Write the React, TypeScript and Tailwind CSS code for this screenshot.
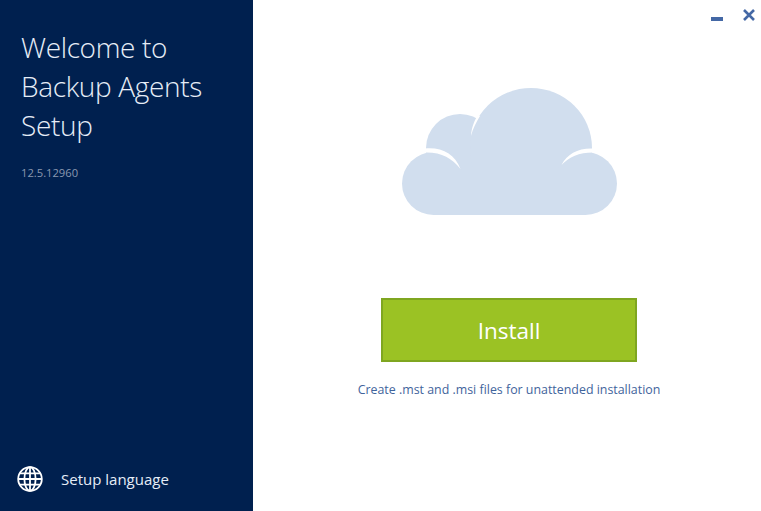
const font = "font-['Open_Sans','Noto_Sans',sans-serif]";

function Cloud() {
  return (
    <svg width="215" height="127" viewBox="402 88 215 127" className="block">
      <g fill="#d1deee">
        <circle cx="460" cy="148" r="34" />
        <rect x="426" y="148" width="166" height="40" />
        <ellipse cx="531" cy="148" rx="61" ry="60" />
        <circle cx="433.5" cy="183.5" r="31.5" />
        <circle cx="585.5" cy="183.5" r="31.5" />
        <rect x="433" y="170" width="152" height="45" />
      </g>
      <g fill="#ffffff">
        <path d="M471 136 C471.5 128 474 121 477.5 116 L480 116 C476.5 122 473 128 471 136Z" />
        <path d="M425 148.5 C442 147 455 154 460.5 169 C452 158 441 152 425 152.5Z" />
        <path d="M593 148.5 C578 148 567 154 561.5 165 C569 157 579 152.5 593 152.5Z" />
      </g>
    </svg>
  );
}

function GlobeIcon() {
  return (
    <svg width="26" height="26" viewBox="0 0 26 26" fill="none" stroke="#ffffff" strokeWidth="1.8">
      <circle cx="13" cy="13" r="11.8" />
      <ellipse cx="13" cy="13" rx="5.6" ry="11.8" />
      <path d="M13 1.2V24.8M1.2 13H24.8M3 7.4H23M3 18.6H23" />
    </svg>
  );
}

export default function App() {
  return (
    <div className={`flex h-[511px] w-[761px] overflow-hidden bg-white ${font}`}>
      <aside className="flex w-[253px] shrink-0 flex-col justify-between bg-[#00204f]">
        <div className="pl-[21px] pt-[28px]">
          <h1 className="text-[28px] font-light leading-[39px] tracking-[-0.35px] text-[#e6edf7]">
            Welcome to
            <br />
            Backup Agents
            <br />
            Setup
          </h1>
          <p className="mt-[20px] text-[11.2px] leading-[16px] text-[#8a98b0]">12.5.12960</p>
        </div>
        <div className="flex items-center gap-[18px] pb-[19px] pl-[17px]">
          <GlobeIcon />
          <span className="text-[15px] leading-[20px] text-[#e6edf7]">Setup language</span>
        </div>
      </aside>
      <main className="flex flex-1 flex-col items-center pl-[4px]">
        <div className="flex h-[88px] w-full items-start justify-end gap-[20px] pr-[6px] pt-[9px]">
          <span className="mt-[8px] h-[4px] w-[12px] bg-[#4468a5]" />
          <svg width="12" height="12" viewBox="0 0 12 12" stroke="#4468a5" strokeWidth="2.6" fill="none">
            <path d="M1 1L11 11M11 1L1 11" />
          </svg>
        </div>
        <Cloud />
        <button className="mt-[83px] flex h-[64px] w-[256px] items-center justify-center border-2 border-[#7fa620] bg-[#9bc224] pt-[2px] text-[22.5px] text-white">
          Install
        </button>
        <a className="mt-[19px] text-[12.4px] leading-[18px] text-[#3f649c]">
          Create .mst and .msi files for unattended installation
        </a>
      </main>
    </div>
  );
}
